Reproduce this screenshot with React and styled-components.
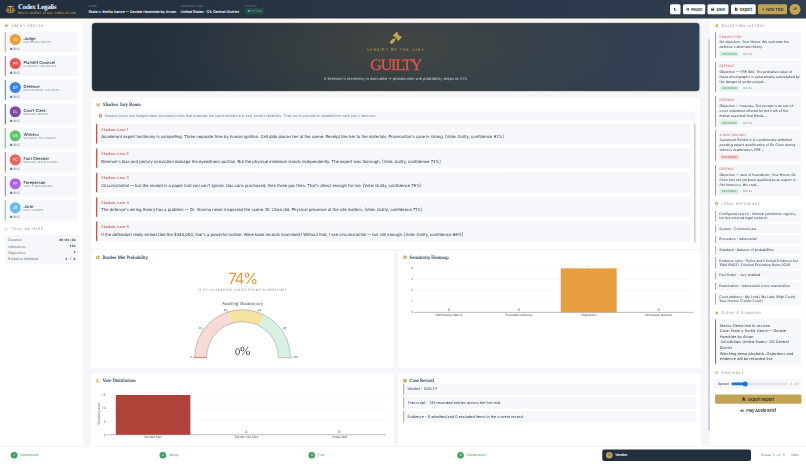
import React, { useState } from 'react';
import styled, { createGlobalStyle, css } from 'styled-components';
import {
  FaScaleBalanced, FaGavel, FaUsers, FaMoon, FaPause, FaFloppyDisk, FaFileExport, FaPlus,
  FaCircleInfo, FaCircleDot, FaTableCells, FaChartBar, FaBoxArchive, FaBook,
  FaFilePdf, FaVolumeHigh, FaSliders, FaChartLine, FaHand, FaClipboardList,
} from 'react-icons/fa6';

const GlobalStyle = createGlobalStyle`
  * {
    box-sizing: border-box;
  }
  body {
    margin: 0;
    overflow: hidden;
    background: #f5f6fa;
    color: #2c3a49;
    font-family: Inter, 'Liberation Sans', sans-serif;
    line-height: 1;
    text-rendering: geometricPrecision;
  }
  svg {
    display: block;
    flex: none;
  }
`

// pale card with a coloured edge on the left
const edge = (color, width) => css`
  background: linear-gradient(${color}, ${color}) 0 0 / ${width}px 100% no-repeat, #f5f7fa;
`

// the whole desktop layout is shown as a small overview
const Frame = styled.div`
  width: 806px;
  height: 464px;
  overflow: hidden;
`
const Overview = styled.div`
  width: 3224px;
  height: 1856px;
  transform: scale(0.25);
  transform-origin: 0 0;
`
const Page = styled.div`
  zoom: 4;
  width: 806px;
  height: 464px;
  display: flex;
  flex-direction: column;
  white-space: nowrap;
`

/* header */
const HeaderWrapper = styled.header`
  flex: none;
  display: flex;
  align-items: center;
  height: 19px;
  padding: 0 5.5px 0 6px;
  background: linear-gradient(90deg, #222e3b, #2f3e50);
  border-bottom: 0.7px solid #b39a58;
  color: #ffffff;
`
const Brand = styled.div`
  display: flex;
  align-items: center;
  gap: 3px;
  width: 77px;
  height: 13px;
  margin-right: 5.5px;
  border-right: 0.4px solid #45505c;
  color: #c5a453;
`
const BrandName = styled.div`
  margin-bottom: 0.7px;
  color: #f4f5f6;
  font: 600 7px/7px 'Liberation Serif', serif;
  letter-spacing: -0.32px;
`
const BrandTag = styled.div`
  font-size: 3px;
  line-height: 4px;
  font-weight: 500;
  letter-spacing: 0.26px;
`
const CaseField = styled.div`
  width: ${({ $width }) => $width}px;
`
const FieldLabel = styled.div`
  color: #8793a0;
  font-size: 2.8px;
  letter-spacing: 0.25px;
  margin-bottom: 1.6px;
`
const FieldValue = styled.div`
  font-size: 3.6px;
  line-height: 4.4px;
  font-weight: 600;
`
const StatusPill = styled.div`
  display: flex;
  align-items: center;
  justify-content: center;
  width: 20px;
  height: 6px;
  margin-top: -0.6px;
  border-radius: 3px;
  background: #2a4a4c;
  color: #55b585;
  font-size: 3.2px;
  font-weight: 500;
`
const Actions = styled.div`
  display: flex;
  align-items: center;
  gap: 2.4px;
  margin-left: auto;
`
const HeaderButton = styled.button`
  display: flex;
  align-items: center;
  justify-content: center;
  gap: 1.6px;
  width: ${({ $width }) => $width}px;
  height: 10px;
  padding: 0;
  border: 0;
  border-radius: 1.6px;
  background: ${({ $gold }) => ($gold ? '#c1a352' : '#ffffff')};
  color: #26313d;
  font: 600 3.8px Inter, sans-serif;
`
const UserBadge = styled.div`
  width: 11px;
  height: 11px;
  border-radius: 50%;
  background: #c1a352;
  color: #26313d;
  font-size: 3.6px;
  line-height: 11px;
  text-align: center;
  font-weight: 500;
`

/* columns */
const Body = styled.div`
  flex: none;
  height: 427px;
  display: flex;
  overflow: hidden;
`
const SidePanel = styled.aside`
  flex: none;
  display: flex;
  flex-direction: column;
  background: #ffffff;
  > * {
    flex-shrink: 0;
  }
`
const LeftPanel = styled(SidePanel)`
  width: 83.5px;
  padding: 4.5px 5px 0 4.5px;
`
const RightPanel = styled(SidePanel)`
  width: 96px;
  padding: 4.5px 4.5px 0 5px;
`
const PanelTitle = styled.h2`
  display: flex;
  align-items: center;
  gap: 3px;
  height: 4px;
  margin: ${({ $top }) => $top || 0}px 0 ${({ $bottom }) => $bottom}px;
  color: #7f8a97;
  font-size: 3.25px;
  font-weight: 400;
  letter-spacing: 0.62px;
  svg {
    color: #cfab58;
  }
`

const AgentCard = styled.div`
  height: 21px;
  margin-bottom: 3.05px;
  padding: 2.5px 0 0 5.2px;
  border-radius: 1.5px;
  ${({ $color }) => edge($color, 1.3)}
`
const AgentTop = styled.div`
  display: flex;
  align-items: center;
  gap: 2.8px;
`
const Avatar = styled.div`
  width: 11px;
  height: 11px;
  border-radius: 50%;
  background: ${({ $color }) => $color};
  color: #ffffff;
  font-size: 3.7px;
  line-height: 11px;
  text-align: center;
`
const AgentName = styled.div`
  font-size: 4.05px;
  line-height: 4.6px;
  font-weight: 500;
`
const AgentRole = styled.div`
  color: #7f8a96;
  font-size: 2.8px;
  line-height: 3px;
  letter-spacing: 0.16px;
`
const AgentState = styled.div`
  margin-top: 2.2px;
  color: #6f7a87;
  font-size: 3px;
  font-weight: 500;
`
const Metrics = styled.div`
  height: 29.5px;
  padding: 2.6px 3px 0 3.8px;
  border-radius: 2px;
  background: #f5f7fa;
`
const MetricRow = styled.div`
  display: flex;
  justify-content: space-between;
  align-items: center;
  height: 6.1px;
  color: #5f6b79;
  font-size: 3.4px;
  b {
    color: #2c3a49;
    font: 700 3.4px 'Liberation Mono', monospace;
  }
`

/* verdict page */
const MainWrapper = styled.main`
  flex: 1;
  min-width: 0;
  height: 427px;
  overflow: hidden;
  padding: 3.5px 8px 0;
`
const PageScroll = styled.div`
  flex: none;
  width: 2px;
  height: 392px;
  margin: 20px 0 0 0;
  background: #ced5df;
  border-radius: 1px;
`
const Banner = styled.section`
  display: flex;
  flex-direction: column;
  align-items: center;
  height: 69px;
  margin-bottom: 6px;
  padding-top: 9px;
  border: 0.6px solid #a8935a;
  border-radius: 4px;
  background:
    radial-gradient(ellipse 40% 130% at 50% 35%, rgba(160, 130, 50, 0.2), transparent),
    linear-gradient(110deg, #232e3a, #334153);
`
const BannerLabel = styled.div`
  margin-top: 3.4px;
  color: #c5a453;
  font-size: 3.6px;
  line-height: 4px;
  letter-spacing: 0.93px;
`
const Verdict = styled.div`
  margin-top: 4.6px;
  color: #f0524b;
  font: 500 16px/17px 'Liberation Serif', serif;
  letter-spacing: -1.2px;
  -webkit-text-stroke: 0.25px #f0524b;
`
const BannerNote = styled.div`
  margin-top: 3.6px;
  color: #c3c9cf;
  font-size: 3.88px;
  line-height: 5px;
`
const Card = styled.section`
  height: ${({ $height }) => $height}px;
  padding: 4.8px 4.5px 0;
  background: #ffffff;
  border-radius: 2px;
`
const CardTitle = styled.h3`
  display: flex;
  align-items: center;
  gap: 2.6px;
  height: 5px;
  margin: 0;
  color: #36475a;
  font: 400 4.8px/5px 'Liberation Serif', serif;
  -webkit-text-stroke: 0.12px #36475a;
  svg {
    color: #c8a956;
  }
`
const InfoBar = styled.div`
  display: flex;
  align-items: center;
  gap: 2px;
  height: 9px;
  margin-top: 4px;
  padding-left: 2.6px;
  background: #f5f7fa;
  color: #7b8693;
  font-size: 3.6px;
  svg {
    color: #c5a453;
  }
`
const JurorArea = styled.div`
  display: flex;
  gap: 4px;
  margin-top: 3.3px;
`
const JurorList = styled.div`
  width: 594.5px;
`
const JurorScroll = styled.div`
  width: 1.5px;
  height: 119px;
  background: #c6ccd3;
`
const JurorCard = styled.div`
  height: 20.5px;
  margin-bottom: 3.85px;
  padding: 3.6px 0 0 5.3px;
  border-radius: 1.5px;
  ${edge('#c0544a', 1.3)}
`
const JurorName = styled.div`
  color: #c4564d;
  font-size: 3.65px;
  line-height: 4px;
  font-weight: 500;
`
const JurorText = styled.div`
  margin-top: 3px;
  font-size: 4.07px;
  line-height: 5px;
`
const ChartGrid = styled.div`
  display: grid;
  grid-template-columns: 302px 302px;
  gap: 5.5px 5px;
  margin-top: 1px;
`
const Probability = styled.div`
  margin-top: 10.2px;
  color: #ec9837;
  font-size: 15.5px;
  line-height: 16px;
  letter-spacing: -1.5px;
  text-align: center;
`
const ProbabilityNote = styled.div`
  margin-top: 1.7px;
  color: #7f8a97;
  font-size: 3.2px;
  line-height: 4px;
  letter-spacing: 0.37px;
  text-align: center;
`
const Chart = styled.svg`
  margin: ${({ $margin }) => $margin || '0'};
  overflow: visible;
  font-family: 'Open Sans', sans-serif;
  fill: #3d4650;
`
const RecordItem = styled.div`
  height: 11.7px;
  margin-bottom: 2.05px;
  padding-left: 4.6px;
  border-radius: 1px;
  ${edge('#d2b876', 1.3)}
  font-size: 3.75px;
  line-height: 11.7px;
`

/* right panel */
const Objection = styled.div`
  height: ${({ $height }) => $height}px;
  margin-bottom: 2.6px;
  padding: 3.2px 0 0 4.6px;
  border-radius: 1.5px;
  ${edge('#d98a62', 1.1)}
`
const ObjectionRole = styled.div`
  color: #cc5b50;
  font-size: 3.1px;
  line-height: 3.6px;
  letter-spacing: 0.08px;
`
const ObjectionText = styled.div`
  margin-top: 1.1px;
  font-size: 3.42px;
  line-height: 5.05px;
`
const Stamp = styled.div`
  display: flex;
  align-items: center;
  gap: 4px;
  margin-top: 2px;
  color: #7f8a96;
  font: 3px 'Liberation Mono', monospace;
`
const Tag = styled.span`
  width: 19.5px;
  height: 4.4px;
  border-radius: 2px;
  background: ${({ $red }) => ($red ? '#f8d9d8' : '#d6eedf')};
  color: ${({ $red }) => ($red ? '#d0504a' : '#55a878')};
  font: 500 2.7px/4.4px Inter, sans-serif;
  text-align: center;
`
const Reference = styled.div`
  display: flex;
  align-items: center;
  height: ${({ $tall }) => ($tall ? 12.6 : 8.7)}px;
  margin-bottom: 2px;
  padding-left: 4.2px;
  border-radius: 1.5px;
  ${edge('#cdb060', 1.1)}
  font-size: 3.35px;
  line-height: 3.9px;
  white-space: pre;
`
const Summary = styled.div`
  height: 46px;
  padding: 3.6px 0 0 4.7px;
  border-radius: 2px;
  ${edge('#8f55b0', 1.1)}
  font-size: 3.75px;
  line-height: 5.6px;
  white-space: pre;
`
const SpeedRow = styled.label`
  display: flex;
  align-items: center;
  gap: 3px;
  height: 10.5px;
  margin-bottom: 5.3px;
  padding: 0 3px;
  border-radius: 2px;
  background: #f5f7fa;
  font-size: 3.5px;
  output {
    color: #c9ae6b;
    font: 3.6px 'Liberation Mono', monospace;
    margin-left: auto;
  }
`
const Slider = styled.input`
  appearance: none;
  width: 56px;
  height: 2.6px;
  margin: 0;
  border-radius: 1.3px;
  background: linear-gradient(90deg, #1a73e8 22%, #e3e5e8 22%);
  &::-webkit-slider-thumb {
    appearance: none;
    width: 5px;
    height: 5px;
    border-radius: 50%;
    background: #1a73e8;
  }
`
const SideButton = styled.button`
  display: flex;
  align-items: center;
  justify-content: center;
  gap: 2px;
  width: 100%;
  height: 9.4px;
  margin: 0 0 2.2px;
  padding: 0;
  border: 0;
  border-radius: 1.5px;
  background: ${({ $gold }) => ($gold ? '#c1a352' : '#ffffff')};
  color: #26313d;
  font: 600 3.9px Inter, sans-serif;
`

/* footer */
const Stepper = styled.footer`
  flex: none;
  display: flex;
  align-items: center;
  height: 18px;
  padding-left: 7px;
  border-top: 0.5px solid #eaedf1;
  background: #ffffff;
`
const Step = styled.div`
  display: flex;
  align-items: center;
  gap: 2.6px;
  width: 148.8px;
  height: 11.7px;
  padding-left: 3.8px;
  border-radius: 2px;
  background: ${({ $current }) => ($current ? '#232f3c' : 'transparent')};
  color: ${({ $current }) => ($current ? '#ffffff' : '#45a365')};
  font-size: 3.5px;
  font-weight: ${({ $current }) => ($current ? 600 : 400)};
`
const StepDot = styled.span`
  width: 6.6px;
  height: 6.6px;
  border-radius: 50%;
  background: ${({ $current }) => ($current ? '#c1a352' : '#3f9f60')};
  color: ${({ $current }) => ($current ? '#232f3c' : '#ffffff')};
  font-size: 3.2px;
  line-height: 6.6px;
  text-align: center;
`
const Phase = styled.div`
  margin-left: 10px;
  color: #6f7a86;
  font: 3.3px 'Liberation Mono', monospace;
`

const agents = [
  ['JD', 'Judge', 'PRESIDING COURT', '#f09d38'],
  ['PR', 'Plaintiff Counsel', 'CLAIMANT ADVOCATE', '#e85550'],
  ['DF', 'Defense', 'RESPONDENT COUNSEL', '#3b82f0'],
  ['CL', 'Court Clerk', 'RECORD KEEPER', '#7d4aa5'],
  ['WS', 'Witness', 'WITNESS TESTIMONY', '#5bc766'],
  ['FC', 'Fact Checker', 'RECORD VERIFICATION', '#e8655c'],
  ['FP', 'Foreperson', 'JURY FOREPERSON', '#ae63e6'],
  ['JR', 'Juror', 'FACT FINDER', '#6bbcf0'],
];

const metrics = [
  ['Duration', '00:01:33'],
  ['Utterances', '132'],
  ['Objections', '4'],
  ['Evidence Admitted', '4 / 8'],
];

const jurors = [
  "Accelerant expert testimony is compelling. Three separate fires by human ignition. Cell data places her at the scene. Receipt ties her to the materials. Prosecution's case is strong. [Vote: Guilty, confidence 82%]",
  "Brennan's bias and perjury conviction damage the eyewitness portion. But the physical evidence stands independently. The expert was thorough. [Vote: Guilty, confidence 73%]",
  "Circumstantial — but the receipt is a paper trail you can't ignore. Gas cans purchased, then three gas fires. That's direct enough for me. [Vote: Guilty, confidence 78%]",
  "The defense's wiring theory has a problem — Dr. Sharma never inspected the scene. Dr. Chen did. Physical presence at the site matters. [Vote: Guilty, confidence 71%]",
  "If the defendant really embezzled the $340,000, that's a powerful motive. Were bank records examined? Without that, I see circumstantial — but still enough. [Vote: Guilty, confidence 68%]",
];

const objections = [
  { role: 'PROSECUTOR', lines: ['No objection, Your Honor. We welcome the', "defense's alternate theory."], height: 26.9 },
  { role: 'DEFENSE', lines: ['Objection — FRE 403. The probative value of', 'these photographs is substantially outweighed by', 'the danger of unfair prejud...'], height: 31.8 },
  { role: 'DEFENSE', lines: ['Objection — hearsay. The receipt is an out-of-', 'court statement offered for the truth of the', 'matter asserted: that Emilia ...'], height: 31.8 },
  { role: 'JUDGE (RULING)', lines: ['Sustained. Exhibit A is conditionally admitted', 'pending expert qualification of Dr. Chen during', 'witness examination. FRE ...'], height: 31.8, sustained: true },
  { role: 'DEFENSE', lines: ['Objection — lack of foundation, Your Honor. Dr.', 'Chen has not yet been qualified as an expert in', 'fire forensics. His cred...'], height: 31.8 },
];

const references = [
  'Configured source - Internal jurisdiction registry,\nnot live external legal research',
  'System - Common Law',
  'Procedure - adversarial',
  'Standard - Balance of probabilities',
  'Evidence rules - Police and Criminal Evidence Act\n1984 (PACE), Criminal Procedure Rules 2020',
  'Fact finder - Jury enabled',
  'Examination - Adversarial cross-examination',
  'Court address - My Lord / My Lady (High Court),\nYour Honour (Crown Court)',
];

const summary = `Status: Demo trial in session.
Case: State v. Emilia Vance — Double
Homicide by Arson
Jurisdiction: United States · CA Central
District
Watching demo playback. Objections and
evidence will be recorded live.`;

const record = [
  'Verdict - GUILTY',
  'Transcript - 133 recorded entries across the live trial.',
  'Evidence - 0 admitted and 0 excluded items in the current record.',
];

const steps = ['Dashboard', 'Setup', 'Trial', 'Deliberation', 'Verdict'];

// point on the gauge for a 0-100 value
const gaugePoint = (value, radius) => {
  const angle = Math.PI * (1 - value / 100);
  return [60 + radius * Math.cos(angle), 57.5 - radius * Math.sin(angle)];
};

const gaugeArc = (from, to) => {
  const [a, b, c, d] = [gaugePoint(from, 48), gaugePoint(to, 48), gaugePoint(to, 36), gaugePoint(from, 36)];
  return `M${a} A48 48 0 0 1 ${b} L${c} A36 36 0 0 0 ${d} Z`;
};

const Gauge = () => (
  <Chart width="120" height="61" viewBox="0 0 120 61" $margin="8.6px auto 0">
    <text x="60" y="4.3" fontSize="4.1" textAnchor="middle">Awaiting Shadow Jury</text>
    <path d={gaugeArc(0, 40)} fill="#f5dad8" />
    <path d={gaugeArc(40, 65)} fill="#f5e3a2" />
    <path d={gaugeArc(65, 100)} fill="#d9f1e2" />
    <path d={gaugeArc(0, 100)} fill="none" stroke="#777" strokeWidth="0.4" />
    <path d="M12 57.1H24" stroke="#c98850" strokeWidth="0.9" />
    {[0, 20, 40, 60, 80, 100].map((value) => {
      const [x1, y1] = gaugePoint(value, 48);
      const [x2, y2] = gaugePoint(value, 49.5);
      const [x, y] = gaugePoint(value, 50.3);
      return (
        <g key={value}>
          <path d={`M${x1} ${y1}L${x2} ${y2}`} stroke="#555" strokeWidth="0.4" />
          <text x={x} y={y + 0.7} fontSize="2.8" textAnchor={value < 50 ? 'end' : 'start'}>{value}</text>
        </g>
      );
    })}
    <text x="60" y="55" textAnchor="middle" fontFamily="DejaVu Serif, serif" fontSize="9">
      0<tspan fontFamily="Liberation Serif, serif" fontSize="12.5" dx="-0.5">%</tspan>
    </text>
  </Chart>
);

const BarChart = ({ top, labels, values, ticks, left, right, base, scale, color, barRatio }) => {
  const band = (right - left) / labels.length;
  return (
    <g>
      {ticks.map((tick) => (
        <g key={tick}>
          <path d={`M${left} ${base - tick * scale}H${right}`} stroke={tick ? '#eceef0' : '#858b91'} strokeWidth={tick ? 0.5 : 0.6} />
          <text x={left - 1} y={base - tick * scale + 1} fontSize="3" textAnchor="end">{tick}</text>
        </g>
      ))}
      {labels.map((label, i) => {
        const center = left + band * (i + 0.5);
        return (
          <g key={label}>
            <rect
              x={center - (band * barRatio) / 2}
              y={base - values[i] * scale}
              width={band * barRatio}
              height={values[i] * scale}
              fill={color}
            />
            {values[i] === 0 && <text x={center} y={base - 1.8} fontSize="3.8" textAnchor="middle">0</text>}
            {top && values[i] > 0 && <text x={center} y={base - values[i] * scale - 1} fontSize="1.8" textAnchor="middle">{values[i]}</text>}
            <text x={center} y={base + 3.6} fontSize="3.1" textAnchor="middle">{label}</text>
          </g>
        );
      })}
    </g>
  );
};

const Header = () => (
  <HeaderWrapper>
    <Brand>
      <FaScaleBalanced size={9} />
      <div>
        <BrandName>Codex Legalis</BrandName>
        <BrandTag>MULTI-AGENT LEGAL SIMULATION</BrandTag>
      </div>
    </Brand>
    <CaseField $width={92}>
      <FieldLabel>CASE</FieldLabel>
      <FieldValue>State v. Emilia Vance — Double Homicide by Arson</FieldValue>
    </CaseField>
    <CaseField $width={64}>
      <FieldLabel>JURISDICTION</FieldLabel>
      <FieldValue>United States · CA Central District</FieldValue>
    </CaseField>
    <CaseField $width={24}>
      <FieldLabel>STATUS</FieldLabel>
      <StatusPill>● In Trial</StatusPill>
    </CaseField>
    <Actions>
      <HeaderButton $width={10.4}><FaMoon size={3.4} /></HeaderButton>
      <HeaderButton $width={22.3}><FaPause size={3.4} />Pause</HeaderButton>
      <HeaderButton $width={21}><FaFloppyDisk size={3.6} />Save</HeaderButton>
      <HeaderButton $width={24.7}><FaFileExport size={3.8} />Export</HeaderButton>
      <HeaderButton $width={29} $gold><FaPlus size={3} />New Trial</HeaderButton>
      <UserBadge>JP</UserBadge>
    </Actions>
  </HeaderWrapper>
);

const App = () => {
  const [speed, setSpeed] = useState(1);

  return (
    <Frame>
      <GlobalStyle />
      <Overview>
        <Page>
          <Header />
          <Body>
            <LeftPanel>
              <PanelTitle $bottom={4}><FaUsers size={4} />AGENT ROSTER</PanelTitle>
              {agents.map(([initials, name, role, color]) => (
                <AgentCard key={name} $color={color}>
                  <AgentTop>
                    <Avatar $color={color}>{initials}</Avatar>
                    <div>
                      <AgentName>{name}</AgentName>
                      <AgentRole>{role}</AgentRole>
                    </div>
                  </AgentTop>
                  <AgentState>● IDLE</AgentState>
                </AgentCard>
              ))}
              <PanelTitle $top={3} $bottom={4}><FaChartLine size={3.5} />TRIAL METRICS</PanelTitle>
              <Metrics>
                {metrics.map(([label, value]) => (
                  <MetricRow key={label}>{label}<b>{value}</b></MetricRow>
                ))}
              </Metrics>
            </LeftPanel>

            <MainWrapper>
              <Banner>
                <FaGavel size={12} color="#c5a453" />
                <BannerLabel>VERDICT OF THE JURY</BannerLabel>
                <Verdict>GUILTY</Verdict>
                <BannerNote>If Brennan's testimony is excluded → prosecution win probability drops to 51%</BannerNote>
              </Banner>
              <Card $height={151.5}>
                <CardTitle><FaUsers size={4.4} />Shadow Jury Room</CardTitle>
                <InfoBar>
                  <FaCircleInfo size={3.8} />
                  Shadow juries are independent simulated juries that evaluate the same evidence to test verdict reliability. They run in parallel to validate the main jury's decision.
                </InfoBar>
                <JurorArea>
                  <JurorList>
                    {jurors.map((text, i) => (
                      <JurorCard key={text}>
                        <JurorName>Shadow Juror {i + 1}</JurorName>
                        <JurorText>{text}</JurorText>
                      </JurorCard>
                    ))}
                  </JurorList>
                  <JurorScroll />
                </JurorArea>
              </Card>
              <ChartGrid>
                <Card $height={118}>
                  <CardTitle><FaCircleDot size={3.8} />Burden Met Probability</CardTitle>
                  <Probability>74%</Probability>
                  <ProbabilityNote>15 OF 20 SHADOW JURIES FOUND BURDEN MET</ProbabilityNote>
                  <Gauge />
                </Card>
                <Card $height={118}>
                  <CardTitle><FaTableCells size={4} />Sensitivity Heatmap</CardTitle>
                  <Chart width="293" height="62" viewBox="0 0 293 62">
                    <BarChart
                      top
                      labels={['Admitted evidence', 'Excluded evidence', 'Objections', 'Witnesses queued']}
                      values={[0, 0, 4, 0]}
                      ticks={[0, 1, 2, 3, 4]}
                      left={11} right={290.5} base={52.6} scale={11}
                      color="#e69e3f" barRatio={0.8}
                    />
                  </Chart>
                </Card>
                <Card $height={80}>
                  <CardTitle><FaChartBar size={4} />Vote Distribution</CardTitle>
                  <Chart width="293" height="62" viewBox="0 0 293 62">
                    <text transform="translate(3.6 30.5) rotate(-90)" fontSize="3.4" textAnchor="middle">Shadow Juries</text>
                    <BarChart
                      labels={['Burden Met', 'Burden Not Met', 'Undecided']}
                      values={[15, 0, 0]}
                      ticks={[0, 5, 10, 15]}
                      left={10.5} right={290} base={51.5} scale={2.65}
                      color="#b04339" barRatio={0.8}
                    />
                  </Chart>
                </Card>
                <Card $height={80}>
                  <CardTitle><FaBoxArchive size={4} />Case Record</CardTitle>
                  {record.map((text) => <RecordItem key={text}>{text}</RecordItem>)}
                </Card>
              </ChartGrid>
            </MainWrapper>
            <PageScroll />

            <RightPanel>
              <PanelTitle $bottom={4}><FaHand size={3.4} />OBJECTION HISTORY</PanelTitle>
              {objections.map(({ role, lines, height, sustained }, i) => (
                <Objection key={i} $height={height}>
                  <ObjectionRole>{role}</ObjectionRole>
                  <ObjectionText>{lines.map((line) => <div key={line}>{line}</div>)}</ObjectionText>
                  <Stamp>
                    <Tag $red={sustained}>{sustained ? 'SUSTAINED' : 'RECORDED'}</Tag>
                    {!sustained && '00:53'}
                  </Stamp>
                </Objection>
              ))}
              <PanelTitle $top={3.2} $bottom={4}><FaBook size={3.4} />LEGAL REFERENCE</PanelTitle>
              {references.map((text) => (
                <Reference key={text} $tall={text.includes('\n')}>{text}</Reference>
              ))}
              <PanelTitle $top={3.8} $bottom={4}><FaClipboardList size={3.4} />CLERK'S SUMMARY</PanelTitle>
              <Summary>{summary}</Summary>
              <PanelTitle $top={5.8} $bottom={4}><FaSliders size={3.4} />CONTROLS</PanelTitle>
              <SpeedRow>
                Speed
                <Slider type="range" min="0.3" max="3.5" step="0.1" value={speed} onChange={(e) => setSpeed(Number(e.target.value))} />
                <output>{speed.toFixed(1)}x</output>
              </SpeedRow>
              <SideButton $gold><FaFilePdf size={3.8} />Export Report</SideButton>
              <SideButton><FaVolumeHigh size={4} />Play Audio Brief</SideButton>
            </RightPanel>
          </Body>
          <Stepper>
            {steps.map((label, i) => {
              const current = i === steps.length - 1;
              return (
                <Step key={label} $current={current}>
                  <StepDot $current={current}>{i === 0 ? '✓' : i + 1}</StepDot>
                  {label}
                </Step>
              );
            })}
            <Phase>Phase 5 of 5 · 100%</Phase>
          </Stepper>
        </Page>
      </Overview>
    </Frame>
  );
};

export default App;
